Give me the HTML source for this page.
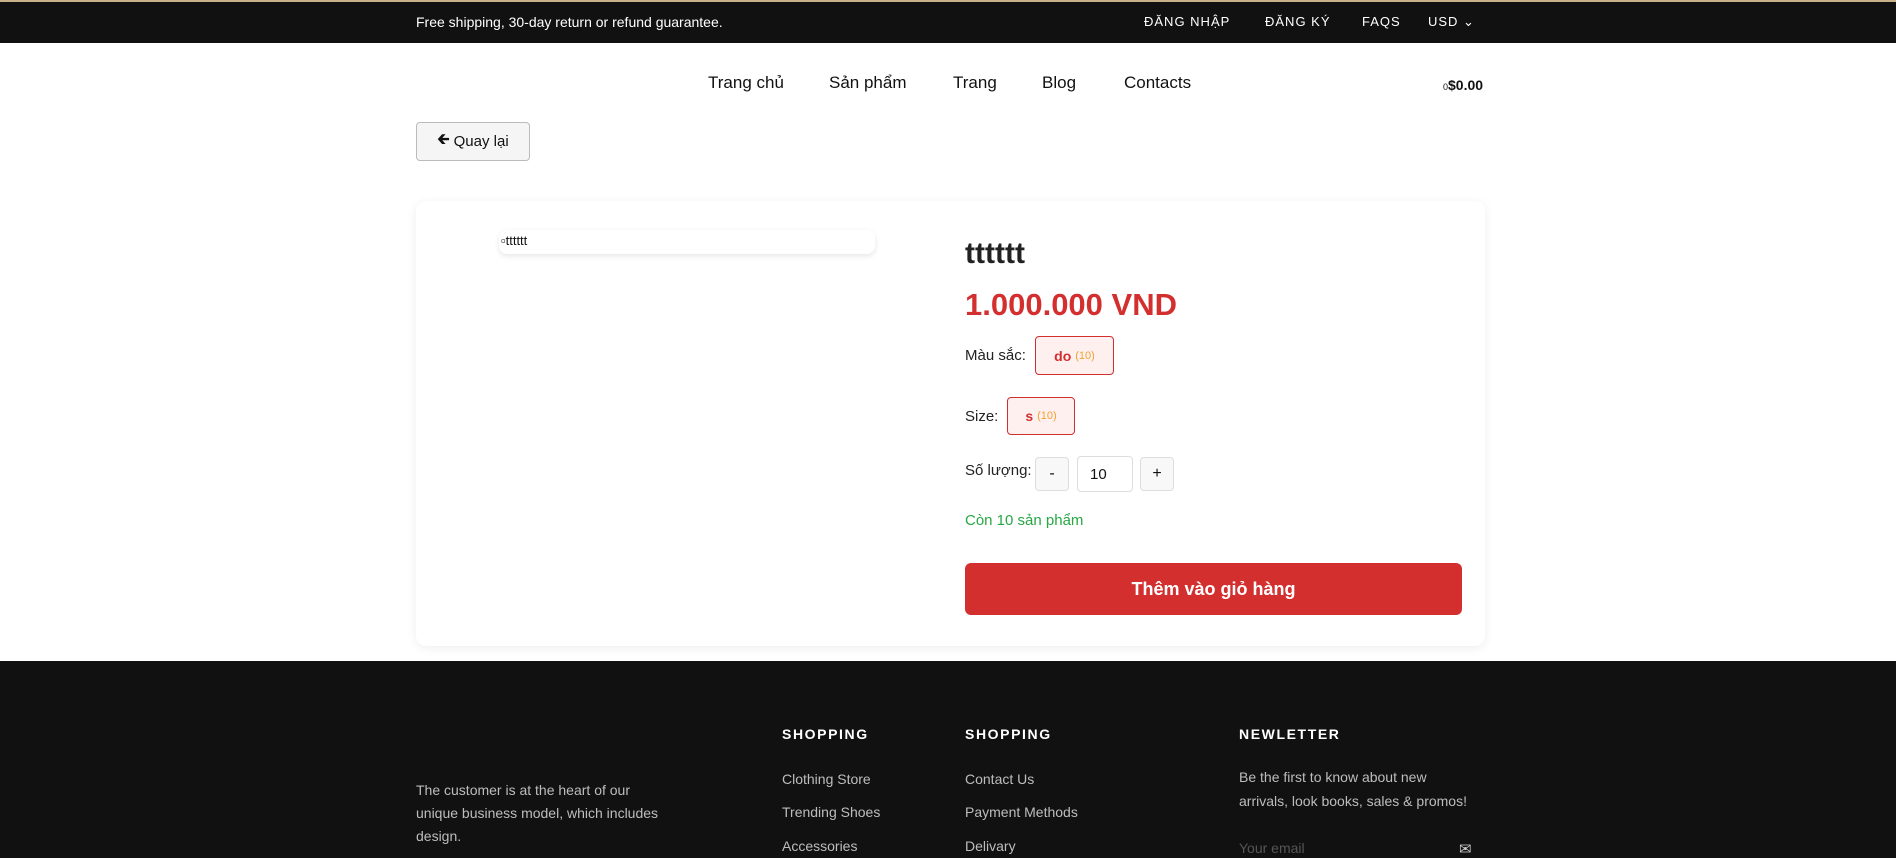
<!DOCTYPE html>
<html><head><meta charset="utf-8"><style>
*{box-sizing:border-box;margin:0;padding:0}
body{width:1896px;height:858px;overflow:hidden;background:#fff;font-family:"Liberation Sans",sans-serif;color:#111;position:relative}
.a{position:absolute;white-space:nowrap}
.top{position:absolute;left:0;top:0;width:1896px;height:43px;background:#111;border-top:2px solid #c9b28a}
.top .a{color:#fff;font-size:14px;top:12px}
.nav{font-size:17px;top:73px;color:#111}
.lbl{font-size:15px;color:#222}
.opt{position:absolute;border:1px solid #d32f2f;background:#fff0f0;border-radius:4px;color:#d32f2f;font-weight:bold;font-size:14px;display:flex;align-items:center;justify-content:center}
.opt small{color:#f0a030;font-weight:normal;font-size:11px;margin-left:4px}
.qb{position:absolute;border:1px solid #ddd;background:#f8f8f8;border-radius:4px;display:flex;align-items:center;justify-content:center;font-size:16px}
.foot{position:absolute;left:0;top:661px;width:1896px;height:197px;background:#111}
.fh{color:#fff;font-weight:bold;font-size:14px;letter-spacing:1.6px}
.fl{color:#bdbdbd;font-size:14px}
</style></head><body>
<div class="top">
<div class="a" style="left:416px">Free shipping, 30-day return or refund guarantee.</div>
<div class="a" style="left:1144px;letter-spacing:1px;font-size:13px">ĐĂNG NHẬP</div>
<div class="a" style="left:1265px;letter-spacing:1px;font-size:13px">ĐĂNG KÝ</div>
<div class="a" style="left:1362px;letter-spacing:1px;font-size:13px">FAQS</div>
<div class="a" style="left:1428px;letter-spacing:1px;font-size:13px">USD ⌄</div>
</div>
<div class="a nav" style="left:708px">Trang chủ</div>
<div class="a nav" style="left:829px">Sản phẩm</div>
<div class="a nav" style="left:953px">Trang</div>
<div class="a nav" style="left:1042px">Blog</div>
<div class="a nav" style="left:1124px">Contacts</div>
<div class="a" style="left:1443px;top:77px;font-size:14px;font-weight:bold"><span style="font-size:9px;font-weight:normal">0</span>$0.00</div>
<div class="a" style="left:416px;top:122px;width:114px;height:39px;border:1px solid #bbb;border-radius:4px;background:#f5f5f5;font-size:15px;display:flex;align-items:center;justify-content:center"><b>🡰</b>&nbsp;Quay lại</div>
<div class="a" style="left:416px;top:201px;width:1069px;height:445px;border-radius:10px;box-shadow:0 2px 10px rgba(0,0,0,.07);background:#fff"></div>
<div class="a" style="left:499px;top:230px;width:376px;height:24px;border-radius:8px;box-shadow:0 2px 6px rgba(0,0,0,.1);font-size:13px;padding:3px 0 0 2px">▫tttttt</div>
<div class="a" style="left:965px;top:237px;font-size:30px;font-weight:bold;color:#222">tttttt</div>
<div class="a" style="left:965px;top:287px;font-size:31px;font-weight:bold;color:#d32f2f">1.000.000 VND</div>
<div class="a lbl" style="left:965px;top:347px">Màu sắc:</div>
<div class="opt" style="left:1035px;top:336px;width:79px;height:39px">do<small>(10)</small></div>
<div class="a lbl" style="left:965px;top:408px">Size:</div>
<div class="opt" style="left:1007px;top:397px;width:68px;height:38px">s<small>(10)</small></div>
<div class="a lbl" style="left:965px;top:462px">Số lượng:</div>
<div class="qb" style="left:1035px;top:457px;width:34px;height:34px">-</div>
<div class="qb" style="left:1077px;top:456px;width:56px;height:36px;background:#fff;justify-content:flex-start;padding-left:12px;font-size:15px">10</div>
<div class="qb" style="left:1140px;top:457px;width:34px;height:34px">+</div>
<div class="a" style="left:965px;top:512px;font-size:15px;color:#28a745">Còn 10 sản phẩm</div>
<div class="a" style="left:965px;top:563px;width:497px;height:52px;background:#d32f2f;border-radius:6px;color:#fff;font-weight:bold;font-size:18px;display:flex;align-items:center;justify-content:center">Thêm vào giỏ hàng</div>
<div class="foot"></div>
<div class="a fh" style="left:782px;top:726px">SHOPPING</div>
<div class="a fh" style="left:965px;top:726px">SHOPPING</div>
<div class="a fh" style="left:1239px;top:726px">NEWLETTER</div>
<div class="a fl" style="left:416px;top:779px;line-height:23px">The customer is at the heart of our<br>unique business model, which includes<br>design.</div>
<div class="a fl" style="left:782px;top:771px">Clothing Store</div>
<div class="a fl" style="left:782px;top:804px">Trending Shoes</div>
<div class="a fl" style="left:782px;top:838px">Accessories</div>
<div class="a fl" style="left:965px;top:771px">Contact Us</div>
<div class="a fl" style="left:965px;top:804px">Payment Methods</div>
<div class="a fl" style="left:965px;top:838px">Delivary</div>
<div class="a fl" style="left:1239px;top:765px;line-height:24px">Be the first to know about new<br>arrivals, look books, sales &amp; promos!</div>
<div class="a fl" style="left:1239px;top:840px;color:#555">Your email</div>
<div class="a" style="left:1459px;top:840px;color:#ccc;font-size:15px">✉</div>
</body></html>
